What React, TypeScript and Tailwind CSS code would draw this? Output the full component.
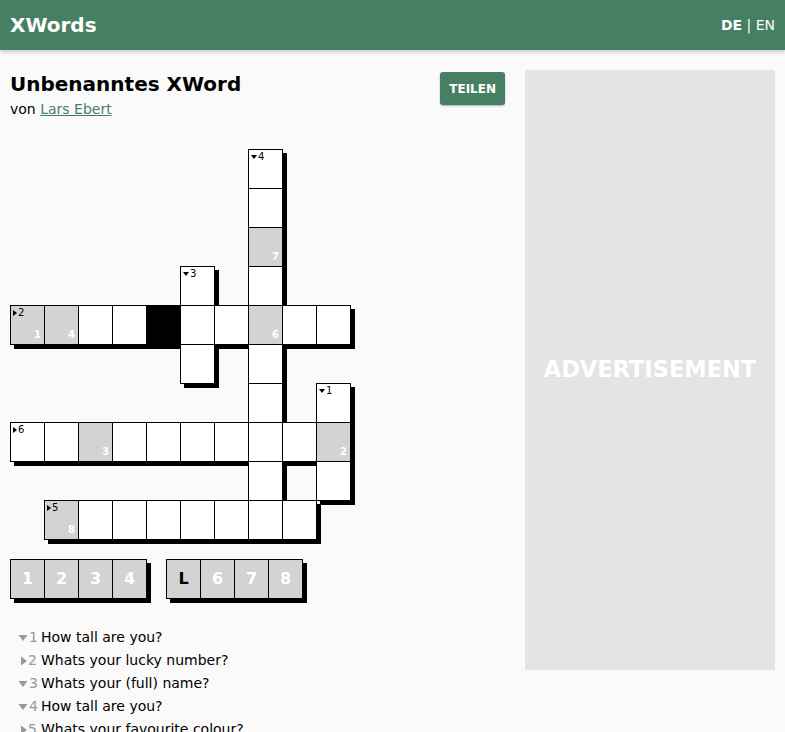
import React from "react";

type Cell = {
  r: number;
  c: number;
  kind?: "grey" | "black";
  clue?: { dir: "down" | "across"; n: number };
  sol?: number;
};

const cells: Cell[] = [
  { r: 0, c: 7, clue: { dir: "down", n: 4 } },
  { r: 1, c: 7 },
  { r: 2, c: 7, kind: "grey", sol: 7 },
  { r: 3, c: 5, clue: { dir: "down", n: 3 } },
  { r: 3, c: 7 },
  { r: 4, c: 0, kind: "grey", clue: { dir: "across", n: 2 }, sol: 1 },
  { r: 4, c: 1, kind: "grey", sol: 4 },
  { r: 4, c: 2 },
  { r: 4, c: 3 },
  { r: 4, c: 4, kind: "black" },
  { r: 4, c: 5 },
  { r: 4, c: 6 },
  { r: 4, c: 7, kind: "grey", sol: 6 },
  { r: 4, c: 8 },
  { r: 4, c: 9 },
  { r: 5, c: 5 },
  { r: 5, c: 7 },
  { r: 6, c: 7 },
  { r: 6, c: 9, clue: { dir: "down", n: 1 } },
  { r: 7, c: 0, clue: { dir: "across", n: 6 } },
  { r: 7, c: 1 },
  { r: 7, c: 2, kind: "grey", sol: 3 },
  { r: 7, c: 3 },
  { r: 7, c: 4 },
  { r: 7, c: 5 },
  { r: 7, c: 6 },
  { r: 7, c: 7 },
  { r: 7, c: 8 },
  { r: 7, c: 9, kind: "grey", sol: 2 },
  { r: 8, c: 7 },
  { r: 8, c: 9 },
  { r: 9, c: 1, kind: "grey", clue: { dir: "across", n: 5 }, sol: 8 },
  { r: 9, c: 2 },
  { r: 9, c: 3 },
  { r: 9, c: 4 },
  { r: 9, c: 5 },
  { r: 9, c: 6 },
  { r: 9, c: 7 },
  { r: 9, c: 8 },
];

const clues = [
  { dir: "down", n: 1, text: "How tall are you?" },
  { dir: "across", n: 2, text: "Whats your lucky number?" },
  { dir: "down", n: 3, text: "Whats your (full) name?" },
  { dir: "down", n: 4, text: "How tall are you?" },
  { dir: "across", n: 5, text: "Whats your favourite colour?" },
  { dir: "across", n: 6, text: "Whats your (full) name?" },
];

function Arrow({ dir, className }: { dir: string; className?: string }) {
  return dir === "down" ? (
    <svg viewBox="0 0 6 4" className={className}>
      <path d="M0 0h6L3 4z" fill="currentColor" />
    </svg>
  ) : (
    <svg viewBox="0 0 4 6" className={className}>
      <path d="M0 0v6l4-3z" fill="currentColor" />
    </svg>
  );
}

function GridCell({ cell }: { cell: Cell }) {
  const bg =
    cell.kind === "black"
      ? "bg-black"
      : cell.kind === "grey"
        ? "bg-[#d3d3d3]"
        : "bg-white";
  return (
    <div
      className={`relative w-[35px] h-[40px] border border-black shadow-[4px_4px_0_#000] ${bg}`}
      style={{ gridColumnStart: cell.c + 1, gridRowStart: cell.r + 1 }}
    >
      {cell.clue && (
        <div className="absolute left-[2px] top-[2px] flex items-center gap-[1px] text-[10px] leading-none text-black">
          <Arrow
            dir={cell.clue.dir}
            className={cell.clue.dir === "down" ? "w-[6px] h-[4px]" : "w-[4px] h-[6px]"}
          />
          <span>{cell.clue.n}</span>
        </div>
      )}
      {cell.sol && (
        <span className="absolute right-[3px] bottom-[4px] text-[10px] font-bold leading-none text-white">
          {cell.sol}
        </span>
      )}
    </div>
  );
}

function SolutionGroup({ items }: { items: { n: number; letter?: string }[] }) {
  return (
    <div className="flex">
      {items.map((it, i) => (
        <div
          key={i}
          className={`w-[35px] h-[40px] border border-black bg-[#d3d3d3] shadow-[4px_4px_0_#000] flex items-center justify-center text-[16px] font-bold ${
            i > 0 ? "-ml-px" : ""
          } ${it.letter ? "text-black" : "text-white"}`}
        >
          {it.letter ?? it.n}
        </div>
      ))}
    </div>
  );
}

export default function App() {
  return (
    <div className="min-h-[732px] bg-[#fafafa] font-['DejaVu_Sans',Verdana,sans-serif] text-black">
      <header className="h-[50px] bg-[#467f64] shadow-[0_2px_4px_rgba(0,0,0,0.2)] flex items-center justify-between pl-[10px] pr-[10px]">
        <span className="text-[20px] font-bold text-white">XWords</span>
        <span className="text-[14px] text-white">
          <span className="font-bold">DE</span> | EN
        </span>
      </header>

      <div className="flex gap-[20px] pl-[10px] pr-[10px] pt-[20px]">
        <main className="w-[495px]">
          <div className="flex justify-between items-start">
            <div>
              <h1 className="text-[20px] font-bold leading-[28px]">Unbenanntes XWord</h1>
              <p className="text-[14px] leading-[22px]">
                von{" "}
                <a className="text-[#467f64] underline" href="#">
                  Lars Ebert
                </a>
              </p>
            </div>
            <button className="mt-[2px] h-[33px] px-[9px] rounded-[3px] bg-[#467f64] text-white text-[12px] font-bold shadow-[0_1px_2px_rgba(0,0,0,0.3)]">
              TEILEN
            </button>
          </div>

          <div className="mt-[29px] grid grid-cols-[repeat(10,34px)] grid-rows-[repeat(10,39px)]">
            {cells.map((cell, i) => (
              <GridCell key={i} cell={cell} />
            ))}
          </div>

          <div className="mt-[20px] flex gap-[19px]">
            <SolutionGroup items={[{ n: 1 }, { n: 2 }, { n: 3 }, { n: 4 }]} />
            <SolutionGroup items={[{ n: 5, letter: "L" }, { n: 6 }, { n: 7 }, { n: 8 }]} />
          </div>

          <ul className="mt-[27px] pl-[8px] text-[14px] leading-[23px]">
            {clues.map((cl, i) => (
              <li key={i} className="flex items-center">
                <span className="flex items-center text-[#999] w-[23px]">
                  <Arrow
                    dir={cl.dir}
                    className={
                      cl.dir === "down"
                        ? "w-[10px] h-[6px] mr-px"
                        : "w-[6px] h-[10px] ml-[3px] mr-px"
                    }
                  />
                  <span>{cl.n}</span>
                </span>
                <span>{cl.text}</span>
              </li>
            ))}
          </ul>
        </main>

        <aside className="w-[250px] h-[600px] bg-[#e4e4e4] flex items-center justify-center">
          <span className="text-[22.5px] font-bold text-white">ADVERTISEMENT</span>
        </aside>
      </div>
    </div>
  );
}
